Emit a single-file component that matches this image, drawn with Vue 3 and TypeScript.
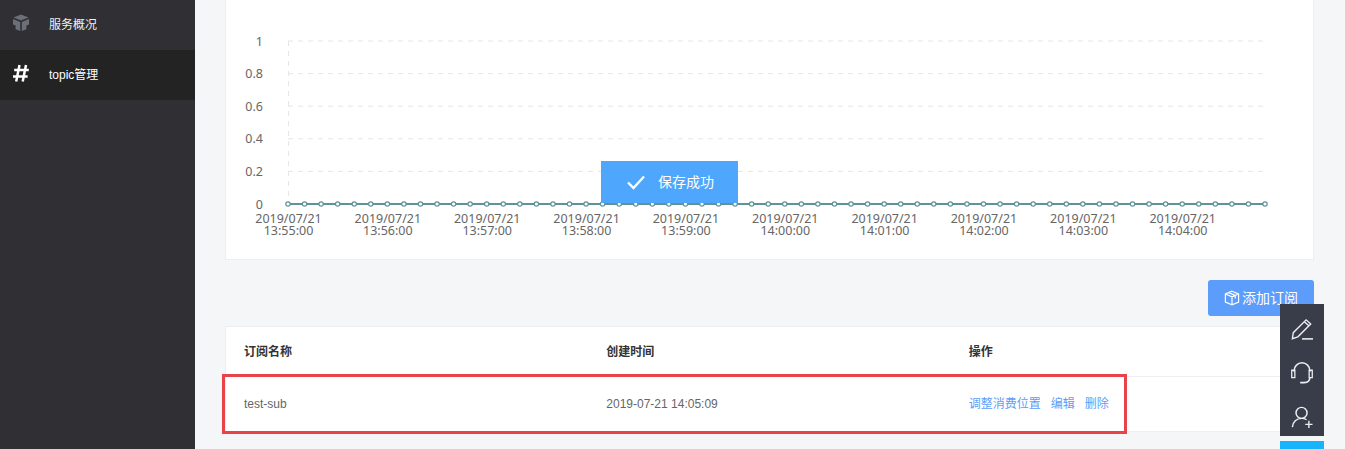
<script setup lang="ts">
const gridYs: number[] = [41, 73.6, 106.2, 138.8, 171.4]
const yLabels: string[] = ['1', '0.8', '0.6', '0.4', '0.2', '0']
const x0 = 288
const step = (1265 - 288) / 59
const points: number[] = Array.from({ length: 60 }, (_, i) => +(x0 + i * step).toFixed(2))
const times: string[] = ['13:55:00', '13:56:00', '13:57:00', '13:58:00', '13:59:00', '14:00:00', '14:01:00', '14:02:00', '14:03:00', '14:04:00']
const ticks = times.map((t, i) => ({ t, x: +(x0 + 0.5 + i * 6 * step).toFixed(2) }))
const yTicks = yLabels.map((label, i) => ({ label, y: 41 + i * 32.6 }))
</script>

<template>
  <div class="page">
    <aside class="sidebar">
      <div class="menu-item">
        <svg class="menu-icon" viewBox="0 0 18 18" width="18" height="18">
          <path d="M9 .5 16.5 3.4 9 6.4 1.5 3.4Z" fill="#6c6f78" />
          <path d="M1 5 8.2 7.9V17L3.6 15.2V11.5L1 10.5Z" fill="#6c6f78" />
          <path d="M17 5 9.8 7.9V17L14.4 15.2V11.5L17 10.5Z" fill="#6c6f78" />
        </svg>
        <span>服务概况</span>
      </div>
      <div class="menu-item active">
        <svg class="menu-icon" viewBox="0 0 18 18" width="18" height="18">
          <path d="M7.5 1 4.2 17.5M14 1 10.7 17.5M2.2 6H16.8M1 12.4H15.6" fill="none" stroke="#fff" stroke-width="2.5" />
        </svg>
        <span>topic管理</span>
      </div>
    </aside>

    <main class="main">
      <section class="chart-card">
        <svg class="chart" viewBox="226 0 1087 259" width="1087" height="259">
          <line v-for="y in gridYs" :key="y" x1="288" x2="1265" :y1="y" :y2="y" class="grid" />
          <line x1="288.5" x2="288.5" y1="41" y2="204" class="grid" />
          <text v-for="t in yTicks" :key="t.label" x="263" :y="t.y + 4.5" class="y-label">{{ t.label }}</text>
          <line x1="288" y1="204" x2="1265" y2="204" class="series" />
          <circle v-for="p in points" :key="p" :cx="p" cy="204" r="2.2" class="dot" />
          <text v-for="t in ticks" :key="t.t" class="x-label">
            <tspan :x="t.x" y="223">2019/07/21</tspan>
            <tspan :x="t.x" y="235">{{ t.t }}</tspan>
          </text>
        </svg>
      </section>

      <div class="toolbar">
        <button class="add-btn" type="button">
          <svg viewBox="0 0 16 16" width="16" height="16">
            <path d="M8 1.2 14.6 4V12L8 14.8 1.4 12V4ZM1.4 4 8 6.8 14.6 4M8 6.8V14.8M4.8 2.6 11.2 5.4V8.4" fill="none" stroke="#fff" stroke-width="1.2" />
          </svg>
          <span class="add-label">添加订阅</span>
        </button>
      </div>

      <section class="table-card">
        <div class="row head">
          <div>订阅名称</div>
          <div>创建时间</div>
          <div>操作</div>
        </div>
        <div class="row body">
          <div>test-sub</div>
          <div>2019-07-21 14:05:09</div>
          <div class="actions">
            <a>调整消费位置</a>
            <a>编辑</a>
            <a>删除</a>
          </div>
        </div>
      </section>
    </main>

    <div class="toast">
      <svg viewBox="0 0 20 16" width="20" height="16">
        <path d="M2 8.5 7.5 14 18 2.5" fill="none" stroke="#fff" stroke-width="2.4" />
      </svg>
      <span class="toast-label">保存成功</span>
    </div>

    <div class="highlight"></div>

    <div class="float-tools">
      <svg viewBox="0 0 24 24" width="22" height="22">
        <path d="M1.5 22.5 2.5 16 16.5 2 21.5 6.5 7.5 20.5Z M14.5 4 19.5 8.5" fill="none" stroke="#eceef2" stroke-width="1.5" />
        <path d="M12 22.8H24" stroke="#eceef2" stroke-width="1.7" />
      </svg>
      <svg viewBox="0 0 24 24" width="22" height="22">
        <path d="M3.4 10.5V9.5A8.6 8.6 0 0 1 20.6 9.5V10.5" fill="none" stroke="#eceef2" stroke-width="1.6" />
        <path d="M.8 9H4.2V17H.8ZM19.8 9H23.2V17H19.8Z" fill="none" stroke="#eceef2" stroke-width="1.4" />
        <path d="M20.5 17C20.5 20.5 18 22.5 14.5 22.5H10" fill="none" stroke="#eceef2" stroke-width="1.7" />
      </svg>
      <svg viewBox="0 0 24 24" width="22" height="22">
        <circle cx="11.5" cy="7.5" r="6" fill="none" stroke="#eceef2" stroke-width="1.6" />
        <path d="M1.5 23C2 17.5 6 13.5 11.5 13.5 13.5 13.5 15.5 14 17 15" fill="none" stroke="#eceef2" stroke-width="1.6" />
        <path d="M15.5 20H23.5M19.5 16V24" stroke="#eceef2" stroke-width="1.5" />
      </svg>
    </div>
    <div class="float-cap"></div>
  </div>
</template>

<style>
html,
body {
  margin: 0;
  overflow: hidden;
}
</style>

<style scoped>
.page {
  position: relative;
  display: flex;
  width: 1345px;
  height: 449px;
  overflow: hidden;
  background: #f5f6f8;
  font-family: "Liberation Sans", "Noto Sans CJK SC", sans-serif;
  font-size: 12px;
}
.sidebar {
  flex: none;
  width: 195px;
  background: #303034;
}
.menu-item {
  display: flex;
  align-items: center;
  box-sizing: border-box;
  height: 50px;
  padding: 0 0 4px 12px;
  gap: 19px;
  color: #f2f2f2;
}
.menu-item.active {
  background: #232323;
  color: #fff;
}
.menu-icon {
  flex: none;
}
.main {
  flex: 1;
  min-width: 0;
  padding: 0 31px 0 30px;
}
.chart-card {
  height: 259px;
  background: #fff;
  border: 1px solid #eceef1;
  border-top: none;
}
.chart {
  display: block;
}
.grid {
  stroke: #e6e6e6;
  stroke-width: 1;
  stroke-dasharray: 5 5;
}
.y-label {
  fill: #666;
  font-family: "Noto Sans", "Liberation Sans", sans-serif;
  font-size: 12.5px;
  text-anchor: end;
}
.x-label {
  fill: #666;
  font-family: "Noto Sans", "Liberation Sans", sans-serif;
  font-size: 12.5px;
  text-anchor: middle;
}
.series {
  stroke: #5f9299;
  stroke-width: 2;
}
.dot {
  fill: #fff;
  stroke: #5f9299;
  stroke-width: 1.2;
}
.toolbar {
  display: flex;
  justify-content: flex-end;
  margin-top: 20px;
}
.add-btn {
  display: flex;
  align-items: center;
  justify-content: center;
  gap: 2px;
  width: 106px;
  height: 36px;
  padding: 0;
  border: none;
  border-radius: 3px;
  background: #5c9dfb;
  color: #fff;
  font: inherit;
  font-size: 14px;
}
.add-label {
  padding-bottom: 2px;
}
.table-card {
  margin-top: 10px;
  background: #fff;
  border: 1px solid #eceef1;
}
.row {
  display: grid;
  grid-template-columns: repeat(3, 1fr);
  align-items: center;
}
.row > div {
  padding-left: 18px;
}
.head {
  box-sizing: border-box;
  height: 50px;
  padding-bottom: 2px;
  border-bottom: 1px solid #eceef1;
  color: #333;
  font-weight: 700;
}
.body {
  height: 54px;
  color: #666;
}
.actions {
  display: flex;
  gap: 10px;
  padding-bottom: 4px;
}
.actions a {
  color: #5c9dfb;
}
.toast {
  position: absolute;
  left: 601px;
  top: 161px;
  display: flex;
  align-items: center;
  gap: 12px;
  box-sizing: border-box;
  width: 137px;
  height: 42px;
  padding-left: 25px;
  background: #4ea6fd;
  color: #fff;
  font-size: 14px;
}
.toast-label {
  padding-bottom: 2px;
}
.highlight {
  position: absolute;
  left: 222px;
  top: 374px;
  box-sizing: border-box;
  width: 905px;
  height: 60px;
  border: 3px solid #e8434a;
}
.float-tools {
  position: absolute;
  left: 1280px;
  top: 304px;
  display: flex;
  flex-direction: column;
  align-items: center;
  gap: 22px;
  box-sizing: border-box;
  width: 44px;
  height: 132px;
  padding-top: 14px;
  background: #393d4a;
}
.float-cap {
  position: absolute;
  left: 1280px;
  top: 441px;
  width: 44px;
  height: 8px;
  background: #17b4fd;
}
</style>
